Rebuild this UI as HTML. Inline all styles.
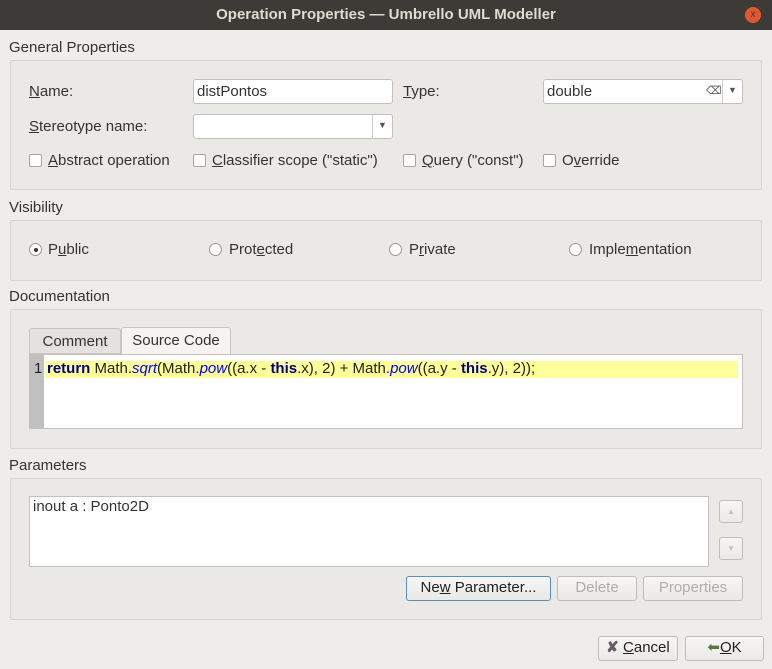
<!DOCTYPE html><html><head><style>
*{box-sizing:border-box;margin:0;padding:0}
body{width:772px;height:669px;background:#efedea;font-family:"Liberation Sans",sans-serif;font-size:15px;color:#333;position:relative;overflow:hidden}
.a{position:absolute;white-space:nowrap}
.box{position:absolute;border:1px solid #d8d5d1;background:#ebe9e6;border-radius:2px}
.in{position:absolute;background:#fff;border:1px solid #c3bfbb;border-radius:3px}
.cb{position:absolute;width:13px;height:13px;border:1px solid #a8a4a0;background:#fff;border-radius:2px}
.rb{position:absolute;width:13px;height:13px;border:1px solid #9a9692;background:#fff;border-radius:50%}
.btn{position:absolute;border:1px solid #c0bcb8;border-radius:3px;background:linear-gradient(#f7f6f5,#ebe9e6);text-align:center;line-height:22px}
u{text-decoration:underline}
</style></head><body>
<div class="a" style="left:0;top:0;width:772px;height:30px;background:#3c3b37;color:#dfdbd2;font-weight:bold;font-size:15px;text-align:center;line-height:30px">Operation Properties — Umbrello UML Modeller</div>
<div class="a" style="left:745px;top:7px;width:16px;height:16px;border-radius:50%;background:#e1582e;color:#3c3b37;font-size:10px;text-align:center;line-height:16px">x</div>

<div class="a" style="left:9px;top:39px">General Properties</div>
<div class="box" style="left:10px;top:60px;width:752px;height:130px"></div>
<div class="a" style="left:29px;top:83px"><u>N</u>ame:</div>
<div class="in" style="left:193px;top:79px;width:200px;height:25px"><span class="a" style="left:3px;top:3px">distPontos</span></div>
<div class="a" style="left:403px;top:83px"><u>T</u>ype:</div>
<div class="in" style="left:543px;top:79px;width:200px;height:25px"><span class="a" style="left:3px;top:3px">double</span><span class="a" style="left:162px;top:4px;font-size:11px;color:#555">⌫</span><div class="a" style="left:178px;top:0;width:1px;height:23px;background:#d0ccc8"></div><span class="a" style="left:184px;top:5px;font-size:9px;color:#555">▼</span></div>
<div class="a" style="left:29px;top:118px"><u>S</u>tereotype name:</div>
<div class="in" style="left:193px;top:114px;width:200px;height:25px"><div class="a" style="left:178px;top:0;width:1px;height:23px;background:#d0ccc8"></div><span class="a" style="left:184px;top:5px;font-size:9px;color:#555">▼</span></div>
<div class="cb" style="left:29px;top:154px"></div><div class="a" style="left:48px;top:152px"><u>A</u>bstract operation</div>
<div class="cb" style="left:193px;top:154px"></div><div class="a" style="left:212px;top:152px"><u>C</u>lassifier scope ("static")</div>
<div class="cb" style="left:403px;top:154px"></div><div class="a" style="left:422px;top:152px"><u>Q</u>uery ("const")</div>
<div class="cb" style="left:543px;top:154px"></div><div class="a" style="left:562px;top:152px">O<u>v</u>erride</div>

<div class="a" style="left:9px;top:199px">Visibility</div>
<div class="box" style="left:10px;top:220px;width:752px;height:61px"></div>
<div class="rb" style="left:29px;top:243px"></div><div class="a" style="left:34px;top:248px;width:4px;height:4px;border-radius:50%;background:#333"></div><div class="a" style="left:48px;top:241px">P<u>u</u>blic</div>
<div class="rb" style="left:209px;top:243px"></div><div class="a" style="left:229px;top:241px">Prot<u>e</u>cted</div>
<div class="rb" style="left:389px;top:243px"></div><div class="a" style="left:409px;top:241px">P<u>r</u>ivate</div>
<div class="rb" style="left:569px;top:243px"></div><div class="a" style="left:589px;top:241px">Imple<u>m</u>entation</div>

<div class="a" style="left:9px;top:288px">Documentation</div>
<div class="box" style="left:10px;top:309px;width:752px;height:140px"></div>
<div class="a" style="left:29px;top:328px;width:92px;height:26px;border:1px solid #c8c4c0;background:#e4e2df;text-align:center;line-height:26px;border-radius:3px 3px 0 0">Comment</div>
<div class="a" style="left:121px;top:327px;width:110px;height:28px;border:1px solid #c8c4c0;border-bottom:none;background:#f5f4f2;text-align:center;line-height:26px;border-radius:3px 3px 0 0">Source Code</div>
<div class="a" style="left:29px;top:354px;width:714px;height:75px;border:1px solid #c4c0bc;background:#fff"></div>
<div class="a" style="left:30px;top:355px;width:14px;height:73px;background:#c0c0c0"></div>
<div class="a" style="left:45px;top:361px;width:693px;height:17px;background:#ffff99"></div>
<div class="a" style="left:34px;top:360px;color:#222;font-size:15px">1</div>
<div class="a" style="left:47px;top:360px;color:#222;font-size:15px"><b style="color:#000080">return</b> Math.<i style="color:#0000ff">sqrt</i>(Math.<i style="color:#0000ff">pow</i>((a.x - <b style="color:#000080">this</b>.x), 2) + Math.<i style="color:#0000ff">pow</i>((a.y - <b style="color:#000080">this</b>.y), 2));</div>

<div class="a" style="left:9px;top:457px">Parameters</div>
<div class="box" style="left:10px;top:478px;width:752px;height:142px"></div>
<div class="a" style="left:29px;top:496px;width:680px;height:71px;border:1px solid #c4c0bc;background:#fff"></div>
<div class="a" style="left:33px;top:498px">inout a : Ponto2D</div>
<div class="btn" style="left:719px;top:500px;width:24px;height:23px;color:#c4c0bc;font-size:8px">▲</div>
<div class="btn" style="left:719px;top:537px;width:24px;height:23px;color:#c4c0bc;font-size:8px">▼</div>
<div class="btn" style="left:406px;top:576px;width:145px;height:25px;border-color:#5b8ec0;color:#222">Ne<u>w</u> Parameter...</div>
<div class="btn" style="left:557px;top:576px;width:80px;height:25px;color:#b0aca8">Delete</div>
<div class="btn" style="left:643px;top:576px;width:100px;height:25px;color:#b0aca8">Properties</div>

<div class="btn" style="left:598px;top:636px;width:80px;height:25px;color:#222"><span style="color:#6b5a6a;font-weight:bold">✘</span> <u>C</u>ancel</div>
<div class="btn" style="left:685px;top:636px;width:79px;height:25px;color:#222"><span style="color:#5a7a3a">⬅</span><u>O</u>K</div>
</body></html>
